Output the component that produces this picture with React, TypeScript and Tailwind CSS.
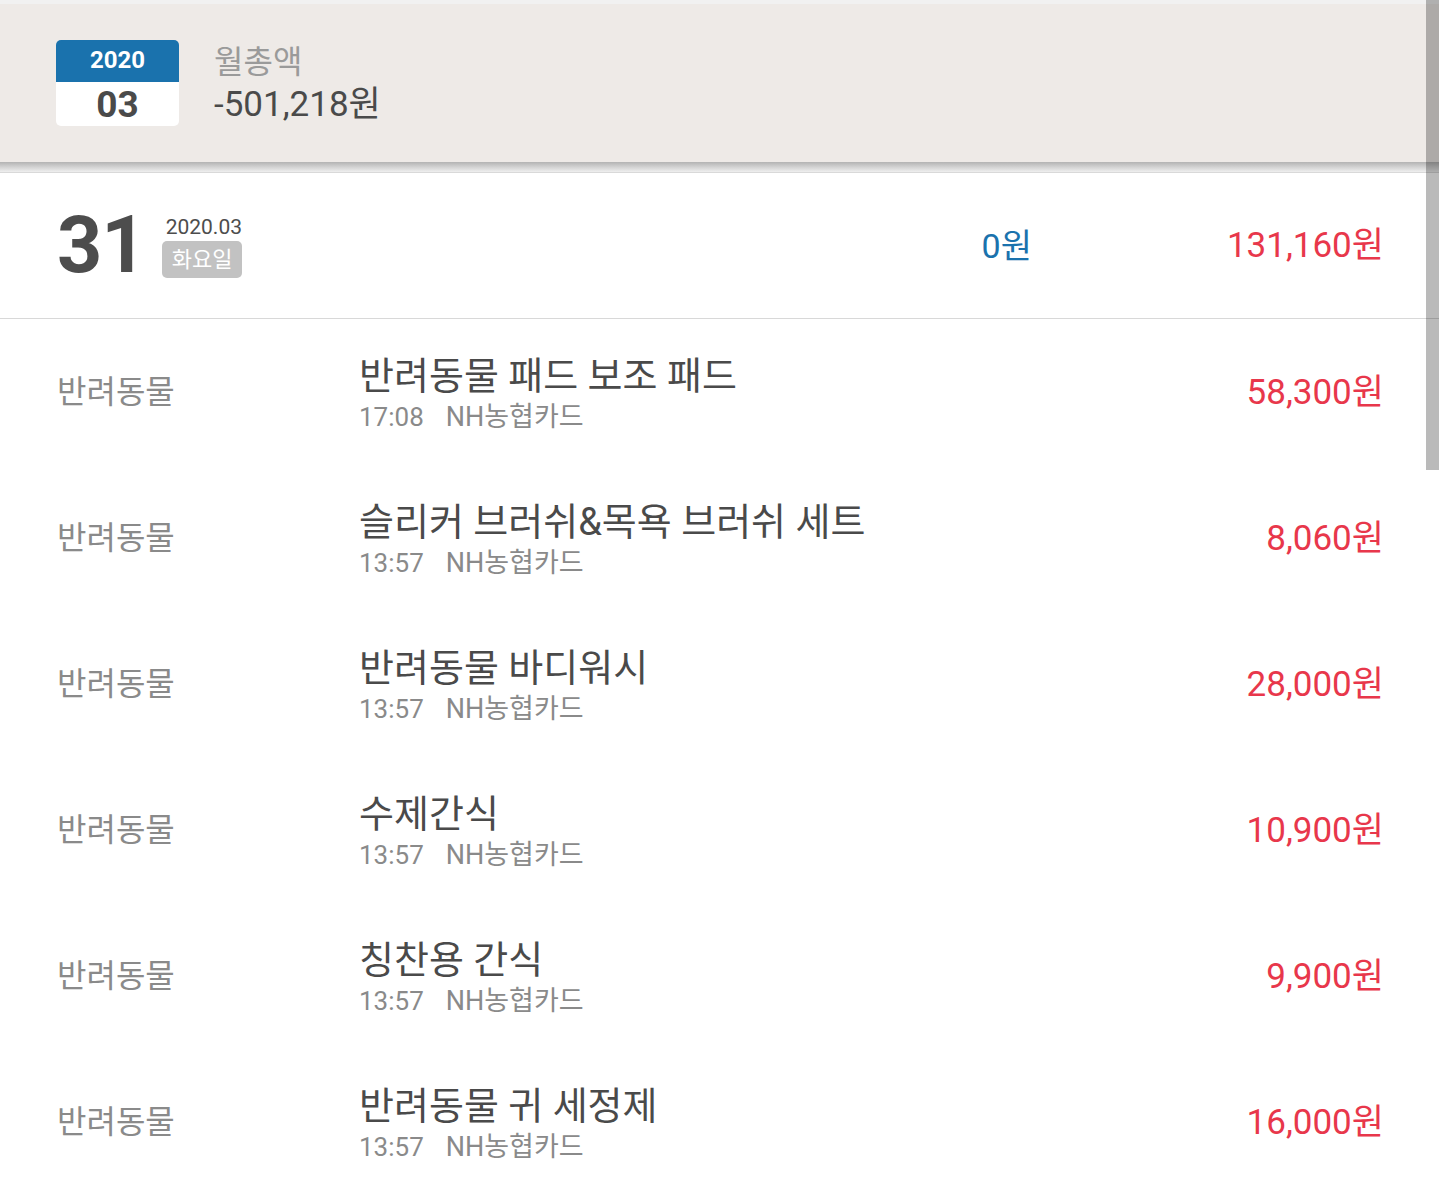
const font = { fontFamily: 'Roboto, "Noto Sans CJK KR", "Noto Sans", sans-serif' };

interface Item {
  title: string;
  time: string;
  amount: string;
}

const items: Item[] = [
  { title: '반려동물 패드 보조 패드', time: '17:08', amount: '58,300원' },
  { title: '슬리커 브러쉬&목욕 브러쉬 세트', time: '13:57', amount: '8,060원' },
  { title: '반려동물 바디워시', time: '13:57', amount: '28,000원' },
  { title: '수제간식', time: '13:57', amount: '10,900원' },
  { title: '칭찬용 간식', time: '13:57', amount: '9,900원' },
  { title: '반려동물 귀 세정제', time: '13:57', amount: '16,000원' },
];

function MonthHeader() {
  return (
    <div className="bg-[#f1f1f1] pt-[4px]">
      <div className="flex h-[158px] items-center bg-[#eeeae7] px-[56px]">
        <div className="flex w-[123px] flex-col overflow-hidden rounded-[5px]">
          <div className="flex h-[42px] items-center justify-center bg-[#1a72ad] pb-[3px] text-[24px] font-bold leading-none text-white">
            2020
          </div>
          <div className="flex h-[44px] items-center justify-center bg-white text-[37px] font-bold leading-none text-[#4a4a4a]">
            03
          </div>
        </div>
        <div className="ml-[35px] flex flex-col">
          <span className="text-[32px] leading-[40px] text-[#9a9a9a]">월총액</span>
          <span className="mt-[3px] text-[35px] leading-[40px] text-[#4a4a4a]">-501,218원</span>
        </div>
      </div>
      <div className="h-[10px] bg-gradient-to-b from-[#b3b3b3] via-[#d2d2d2] to-[#efefef]" />
      <div className="h-px bg-[#d9d9d9]" />
    </div>
  );
}

function DayRow() {
  return (
    <div className="flex h-[146px] items-center border-b border-[#d8d8d8] bg-white pl-[57px] pr-[55px]">
      <span className="text-[79px] font-bold leading-none tracking-[-1px] text-[#4d4d4d]">31</span>
      <div className="ml-[16px] flex flex-col items-start">
        <span className="pl-[4px] text-[21px] leading-[26px] text-[#4d4d4d]">2020.03</span>
        <span className="mt-[1px] rounded-[5px] bg-[#c2c2c2] px-[10px] text-[22px] leading-[37px] text-white">
          화요일
        </span>
      </div>
      <span className="ml-auto text-[34px] leading-none text-[#1a72ad]">0원</span>
      <span className="w-[352px] text-right text-[35px] leading-none text-[#e8374b]">131,160원</span>
    </div>
  );
}

function ItemRow({ item }: { item: Item }) {
  return (
    <div className="flex h-[146px] items-center bg-white pl-[57px] pr-[55px]">
      <span className="w-[302px] shrink-0 text-[32px] leading-none text-[#8a8a8a]">반려동물</span>
      <div className="flex flex-col pt-[2px]">
        <span className="text-[38px] leading-[46px] text-[#4a4a4a]">{item.title}</span>
        <div className="mt-[2px] flex text-[26px] leading-[32px] text-[#8a8a8a]">
          <span>{item.time}</span>
          <span className="ml-[22px] text-[27px]">NH농협카드</span>
        </div>
      </div>
      <span className="ml-auto text-[35px] leading-none text-[#e8374b]">{item.amount}</span>
    </div>
  );
}

export default function App() {
  return (
    <div className="relative h-screen w-full overflow-hidden bg-white" style={font}>
      <MonthHeader />
      <DayRow />
      {items.map((item, i) => (
        <ItemRow key={i} item={item} />
      ))}
      {/* scroll thumb */}
      <div className="absolute right-0 top-0 h-[470px] w-[13px] bg-black/[0.27]" />
    </div>
  );
}
